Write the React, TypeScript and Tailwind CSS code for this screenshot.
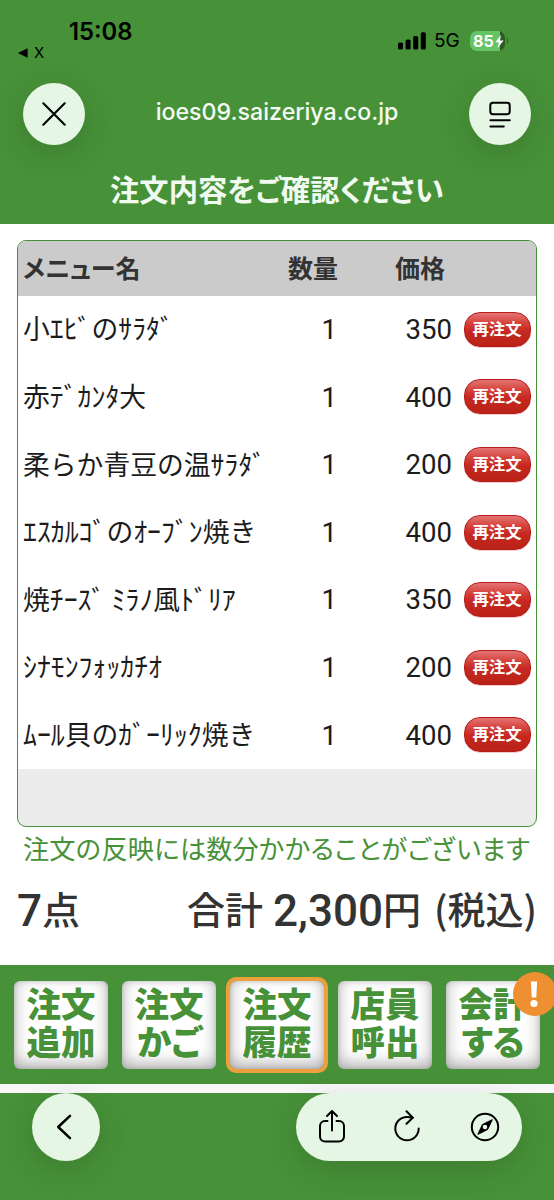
import { clsx } from "clsx";

interface OrderItem {
  name: string;
  count: number;
  price: number;
}

const orders: OrderItem[] = [
  { name: "小ｴﾋﾞのｻﾗﾀﾞ", count: 1, price: 350 },
  { name: "赤ﾃﾞｶﾝﾀ大", count: 1, price: 400 },
  { name: "柔らか青豆の温ｻﾗﾀﾞ", count: 1, price: 200 },
  { name: "ｴｽｶﾙｺﾞのｵｰﾌﾞﾝ焼き", count: 1, price: 400 },
  { name: "焼ﾁｰｽﾞ ﾐﾗﾉ風ﾄﾞﾘｱ", count: 1, price: 350 },
  { name: "ｼﾅﾓﾝﾌｫｯｶﾁｵ", count: 1, price: 200 },
  { name: "ﾑｰﾙ貝のｶﾞｰﾘｯｸ焼き", count: 1, price: 400 },
];

const navItems = [
  { lines: ["注文", "追加"] },
  { lines: ["注文", "かご"] },
  { lines: ["注文", "履歴"], active: true },
  { lines: ["店員", "呼出"] },
  { lines: ["会計", "する"], alert: true },
];

function StatusBar() {
  return (
    <div className="flex h-[66px] justify-between font-['Inter',sans-serif] text-black">
      <div className="pt-[17px] pl-[17px]">
        <div className="pl-[52px] text-[23.8px] leading-[29px] font-semibold">15:08</div>
        <div className="flex items-center gap-[6px] text-[15px] leading-[13px]">
          <svg width="11" height="10" viewBox="0 0 11 10">
            <path d="M.8 5 10.6.2v9.6z" />
          </svg>
          X
        </div>
      </div>
      <div className="mt-[31px] flex h-[20px] items-center pr-[46px]">
        <svg width="28" height="18" viewBox="0 0 28 18">
          <rect x="0" y="10.5" width="5" height="7" rx="1.6" />
          <rect x="7.6" y="7.5" width="5" height="10" rx="1.6" />
          <rect x="15.2" y="4" width="5" height="13.5" rx="1.6" />
          <rect x="22.8" y="0.3" width="5" height="17.2" rx="1.6" />
        </svg>
        <span className="ml-[8px] w-[28px] pt-[1px] text-[19px]">5G</span>
        <div className="ml-[8px] flex h-[20px] w-[35px] items-center overflow-hidden rounded-[7px] bg-[linear-gradient(90deg,#65c466_86%,#2c5a24_86%)] pl-[3px]">
          <span className="text-[16px] font-bold text-white">85</span>
          <svg width="9" height="13" viewBox="0 0 9 13" className="ml-[1px] fill-white">
            <path d="M6 0 .4 7.2h3.4L2.6 13 8.6 5.5H5z" />
          </svg>
        </div>
        <span className="ml-[1.5px] h-[6px] w-[1.5px] rounded-r bg-[#2f6426]" />
      </div>
    </div>
  );
}

function AddressBar() {
  return (
    <div className="flex h-[96px] items-center justify-between px-[23px] text-black">
      <button className="flex size-[62px] items-center justify-center rounded-full bg-[#e5f6e5] shadow-[0_8px_32px_rgba(0,0,0,0.14)]">
        <svg width="24" height="24" viewBox="0 0 24 24" fill="none" stroke="currentColor" strokeWidth="2.1" strokeLinecap="round" className="-ml-[1px]">
          <path d="M1.3 1.3 22.7 22.7M22.7 1.3 1.3 22.7" />
        </svg>
      </button>
      <span className="-translate-y-[2.5px] font-['Inter',sans-serif] text-[23.2px] font-medium text-[#f4fbf3]">
        ioes09.saizeriya.co.jp
      </span>
      <button className="flex size-[62px] items-center justify-center rounded-full bg-[#e5f6e5] shadow-[0_8px_32px_rgba(0,0,0,0.14)]">
        <svg width="22" height="27" viewBox="0 0 22 27" fill="none" stroke="currentColor" strokeWidth="2" strokeLinecap="round">
          <rect x="1.3" y="1.8" width="19.4" height="11.4" rx="2.6" />
          <path d="M1.4 19.2h19.4M1.4 25.4h13.4" />
        </svg>
      </button>
    </div>
  );
}

function ReorderButton() {
  return (
    <button className="flex h-[35px] w-[67px] justify-center rounded-[16px] border-[1.5px] border-[#b51d1d] bg-[linear-gradient(180deg,#e47474_0%,#d6423c_30%,#c52820_55%,#bb2217_100%)] text-[16.4px] leading-[30px] font-bold text-white shadow-[0_0.5px_0.5px_#e89a9a]">
      再注文
    </button>
  );
}

// half-width kana runs are drawn slightly larger than the kanji around them
function ItemName({ name }: { name: string }) {
  return (
    <span className="-translate-y-[1px] whitespace-nowrap">
      {name.split(/([\uff61-\uff9f ]+)/).map((part, i) => (
        <span key={i} className={i % 2 ? "text-[27.8px]" : "text-[26.8px]"}>
          {part}
        </span>
      ))}
    </span>
  );
}

function OrderRow({ item }: { item: OrderItem }) {
  return (
    <div className="grid h-[67.6px] grid-cols-[247px_67px_115px_1fr] items-center pl-[5px] text-[26.8px] text-[#1c1c1c]">
      <ItemName name={item.name} />
      <span className="pt-[1px] text-right font-['Roboto',sans-serif] text-[27.6px]">{item.count}</span>
      <span className="pt-[1px] text-right font-['Roboto',sans-serif] text-[27.6px]">{item.price}</span>
      <div className="pl-[11.5px]">
        <ReorderButton />
      </div>
    </div>
  );
}

function NavButton({ lines, active, alert }: { lines: string[]; active?: boolean; alert?: boolean }) {
  return (
    <button
      className={clsx(
        "relative flex h-[88px] w-[94px] flex-col rounded-[6px] bg-white pt-[4px] text-center text-[34.5px] leading-[34px] font-black text-[#479138] shadow-[inset_0_-5px_16px_rgba(0,0,0,0.32),inset_0_0_4px_rgba(0,0,0,0.16)]",
        active && "outline-[4px] outline-[#ec9f3c]",
      )}
    >
      {lines.map((line) => (
        <span key={line} className="block h-[38px] w-full [font-feature-settings:'palt']">
          {line}
        </span>
      ))}
      {alert && (
        <span className="absolute -top-[9px] -right-[17px] flex size-[44px] items-center justify-center rounded-full bg-[#ee9032]">
          <svg width="8" height="27" viewBox="0 0 8 27" className="-translate-x-[1px] fill-white">
            <path d="M.9.5h6.2L6.3 16.5H1.7z" />
            <circle cx="4" cy="22.5" r="3.6" />
          </svg>
        </span>
      )}
    </button>
  );
}

function BrowserToolbar() {
  return (
    <div className="flex h-[107px] items-start justify-between bg-[#479138] px-[32px] text-black">
      <button className="-mt-[0.5px] flex size-[68px] items-center justify-center rounded-full bg-[#e5f6e5] shadow-[0_8px_32px_rgba(0,0,0,0.14)]">
        <svg width="16" height="26" viewBox="0 0 16 26" fill="none" stroke="currentColor" strokeWidth="2.5" strokeLinecap="round" strokeLinejoin="round" className="-ml-[4px]">
          <path d="M14 1.8 2.2 13 14 24.2" />
        </svg>
      </button>
      <div className="-mt-[0.5px] flex h-[68px] w-[226px] items-center rounded-full bg-[#e5f6e5] pl-[22px] shadow-[0_8px_32px_rgba(0,0,0,0.14)]">
        <svg width="28" height="34" viewBox="0 0 28 34" fill="none" stroke="currentColor" strokeWidth="2" strokeLinecap="round" strokeLinejoin="round" className="-mt-[2px]">
          <path d="M9.5 12H7a5 5 0 0 0-5 5v10.5a5 5 0 0 0 5 5h14a5 5 0 0 0 5-5V17a5 5 0 0 0-5-5h-2.5" />
          <path d="M14 21.5V2M9 7l5-5 5 5" />
        </svg>
        <svg width="28" height="32" viewBox="0 0 28 32" fill="none" stroke="currentColor" strokeWidth="2" strokeLinecap="round" strokeLinejoin="round" className="-mt-[2px] ml-[47px]">
          <path d="M25.700 18.6A11.7 11.7 0 1 1 14 6.9c2 0 3.6.2 5.600.9" />
          <path d="M13.5 1.300 19.8 7.7 13.5 13.8" />
        </svg>
        <svg width="30" height="30" viewBox="0 0 30 30" fill="none" stroke="currentColor" strokeWidth="2" className="ml-[49px]">
          <circle cx="15" cy="15" r="13.2" />
          <path fillRule="evenodd" fill="currentColor" stroke="none" d="M22 7.3c.4-.2.9.3.7.8l-4.2 8.6c-.4.9-1 1.4-1.8 1.8L8.2 22.7c-.5.2-1-.3-.8-.8l4.2-8.6c.4-.9 1-1.4 1.8-1.8zM15 12.7a2.3 2.3 0 1 0 0 4.600 2.3 2.3 0 0 0 0-4.600z" />
        </svg>
      </div>
    </div>
  );
}

export default function App() {
  return (
    <div className="flex h-[1200px] w-[554px] flex-col overflow-hidden bg-white font-['Noto_Sans_CJK_JP',sans-serif]">
      <header className="h-[224px] bg-[#479138]">
        <StatusBar />
        <AddressBar />
        <h1 className="pt-[5px] text-center text-[29.3px] leading-[42px] font-bold text-[#f1faf0] [font-feature-settings:'palt']">
          注文内容をご確認ください
        </h1>
      </header>

      <main className="h-[741px] px-[17px] pt-[16px]">
        <div className="flex h-[587px] flex-col overflow-hidden rounded-[9px] border-[1.5px] border-[#479138] bg-[#ececec]">
          <div className="grid h-[54.5px] shrink-0 grid-cols-[252px_68px_116px_1fr] items-center bg-[#cbcbcb] pb-[2px] pl-[5px] text-[25px] font-bold text-[#333] [font-feature-settings:'palt']">
            <span>メニュー名</span>
            <span className="pl-[13px]">数量</span>
            <span className="pl-[52px]">価格</span>
          </div>
          <div className="bg-white">
            {orders.map((item) => (
              <OrderRow key={item.name} item={item} />
            ))}
          </div>
        </div>
        <p className="pl-[6px] text-[26.2px] leading-[42px] whitespace-nowrap text-[#479138]">
          注文の反映には数分
          <span className="tracking-[0.55px] [font-feature-settings:'palt']">かかることがございます</span>
        </p>
        <div className="flex h-[80px] items-baseline justify-between text-[38px] leading-[82px] font-medium text-[#333]">
          <span className="flex items-baseline">
            <span className="font-['Roboto',sans-serif] text-[44px]">7</span>
            <span className="-translate-y-[2px]">点</span>
          </span>
          <span className="flex items-baseline whitespace-nowrap">
            <span className="mr-[10px] -translate-y-[2px]">合計</span>
            <span className="font-['Roboto',sans-serif] text-[44px]">2,300</span>
            <span className="mr-[13px] -translate-y-[2px]">円</span>
            <span className="-translate-y-[2px]">(税込)</span>
          </span>
        </div>
      </main>

      <nav className="flex h-[119px] justify-between bg-[#479138] px-[14px] pt-[16px]">
        {navItems.map((item) => (
          <NavButton key={item.lines.join("")} {...item} />
        ))}
      </nav>
      <div className="h-[9px] bg-[#f8f8f8]" />
      <BrowserToolbar />
    </div>
  );
}
